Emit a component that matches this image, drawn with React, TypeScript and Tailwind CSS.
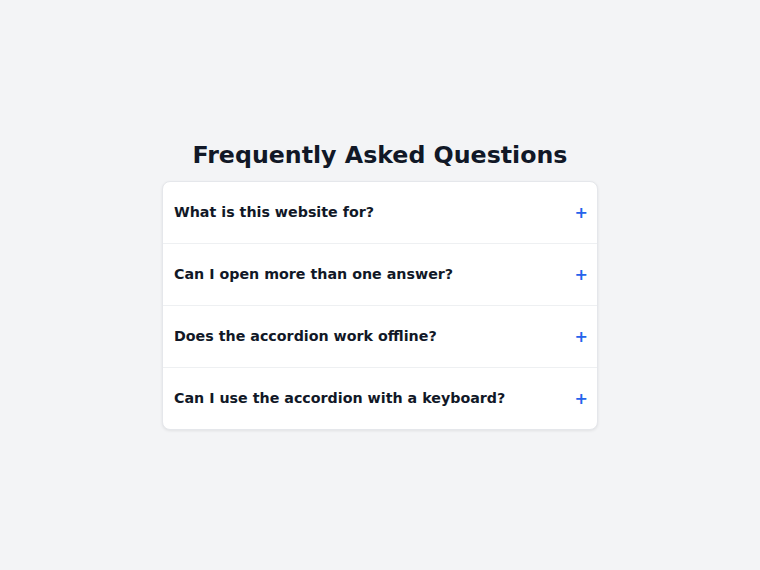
import React from "react";

const questions = [
  "What is this website for?",
  "Can I open more than one answer?",
  "Does the accordion work offline?",
  "Can I use the accordion with a keyboard?",
];

export default function App() {
  return (
    <div
      className="min-h-screen bg-[#f3f4f6] flex flex-col items-center justify-center"
      style={{ fontFamily: '"DejaVu Sans", sans-serif' }}
    >
      <h1 className="text-[23.7px] font-bold text-[#111827] leading-[30px] mb-[11px]">
        Frequently Asked Questions
      </h1>
      <div className="w-[436px] bg-white rounded-lg border border-[#e5e7eb] shadow-[0_1px_3px_rgba(0,0,0,0.08)]">
        {questions.map((q, i) => (
          <button
            key={q}
            className={`w-full flex items-center justify-between pl-[11px] pr-[9px] py-5 text-left ${
              i > 0 ? "border-t border-[#eef0f2]" : ""
            }`}
          >
            <span className="text-[14.25px] font-bold text-[#111827] leading-[21px]">{q}</span>
            <span className="text-[16px] font-bold text-[#2563eb] leading-[21px]">+</span>
          </button>
        ))}
      </div>
    </div>
  );
}
